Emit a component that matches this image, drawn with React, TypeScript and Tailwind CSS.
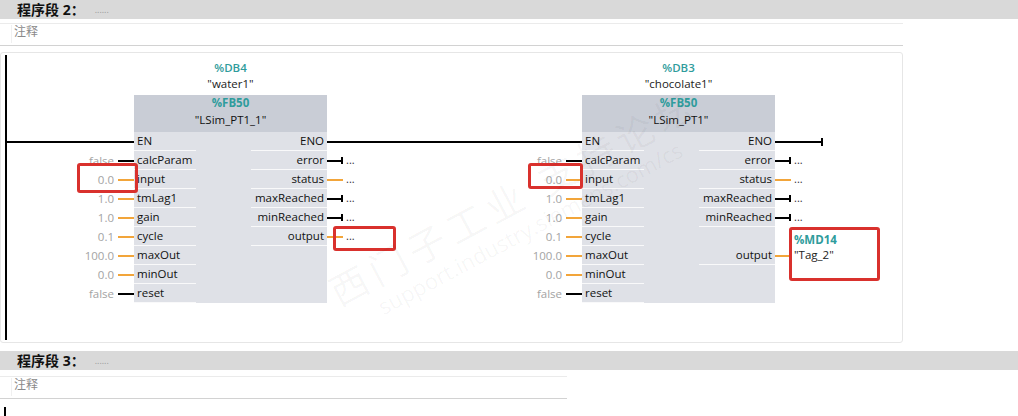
import React from 'react';

type InPin = { value?: string; label: string; kind: 'en' | 'bool' | 'real' };
type OutPin = {
  label?: string;
  kind: 'eno-full' | 'eno-tick' | 'bool' | 'real' | 'none' | 'tag-top' | 'tag';
  text?: string;
};

const ORANGE = 'bg-[#f2a53a]';

const inputs: InPin[] = [
  { label: 'EN', kind: 'en' },
  { value: 'false', label: 'calcParam', kind: 'bool' },
  { value: '0.0', label: 'input', kind: 'real' },
  { value: '1.0', label: 'tmLag1', kind: 'real' },
  { value: '1.0', label: 'gain', kind: 'real' },
  { value: '0.1', label: 'cycle', kind: 'real' },
  { value: '100.0', label: 'maxOut', kind: 'real' },
  { value: '0.0', label: 'minOut', kind: 'real' },
  { value: 'false', label: 'reset', kind: 'bool' },
];

const outputs1: OutPin[] = [
  { label: 'ENO', kind: 'eno-full' },
  { label: 'error', kind: 'bool' },
  { label: 'status', kind: 'real' },
  { label: 'maxReached', kind: 'bool' },
  { label: 'minReached', kind: 'bool' },
  { label: 'output', kind: 'real' },
  { kind: 'none' },
  { kind: 'none' },
  { kind: 'none' },
];

const outputs2: OutPin[] = [
  { label: 'ENO', kind: 'eno-tick' },
  { label: 'error', kind: 'bool' },
  { label: 'status', kind: 'real' },
  { label: 'maxReached', kind: 'bool' },
  { label: 'minReached', kind: 'bool' },
  { kind: 'tag-top', text: '%MD14' },
  { label: 'output', kind: 'tag', text: '"Tag_2"' },
  { kind: 'none' },
  { kind: 'none' },
];

const LeftPin = ({ pin }: { pin: InPin }) => {
  if (pin.kind === 'en') {
    return (
      <div className="h-[19px] flex items-center">
        <div className="flex-1 h-[2px] bg-black" />
      </div>
    );
  }
  return (
    <div className="h-[19px] flex items-center justify-end">
      <span className="text-[11.5px] text-[#a3a3a3] mr-[4px] leading-none">{pin.value}</span>
      <div className={`w-[16px] h-[2px] ${pin.kind === 'bool' ? 'bg-black' : ORANGE}`} />
    </div>
  );
};

const Dots = () => <span className="ml-[3px] text-[11px] text-[#333] leading-none -mt-[3px]">...</span>;

const RightPin = ({ pin }: { pin: OutPin }) => {
  switch (pin.kind) {
    case 'eno-full':
      return (
        <div className="h-[19px] flex items-center">
          <div className="flex-1 h-[2px] bg-black" />
        </div>
      );
    case 'eno-tick':
      return (
        <div className="h-[19px] flex items-center">
          <div className="w-[46px] h-[2px] bg-black" />
          <div className="w-[2px] h-[8px] bg-black" />
        </div>
      );
    case 'bool':
      return (
        <div className="h-[19px] flex items-center">
          <div className="w-[14px] h-[2px] bg-black" />
          <div className="w-[2px] h-[7px] bg-black" />
          <Dots />
        </div>
      );
    case 'real':
      return (
        <div className="h-[19px] flex items-center">
          <div className={`w-[16px] h-[2px] ${ORANGE}`} />
          <Dots />
        </div>
      );
    case 'tag-top':
      return (
        <div className="h-[19px] flex items-end pl-[19px]">
          <span className="text-[11.5px] font-bold text-[#2f9c9c] leading-none mb-[1px]">{pin.text}</span>
        </div>
      );
    case 'tag':
      return (
        <div className="h-[19px] flex items-center">
          <div className={`w-[17px] h-[2px] ${ORANGE}`} />
          <span className="text-[11.5px] text-[#222] leading-none ml-[2px] -mt-[2px]">{pin.text}</span>
        </div>
      );
    default:
      return <div className="h-[19px]" />;
  }
};

const FBBlock = ({
  db,
  inst,
  fb,
  name,
  leftClass,
  rightClass,
  outputs,
}: {
  db: string;
  inst: string;
  fb: string;
  name: string;
  leftClass: string;
  rightClass: string;
  outputs: OutPin[];
}) => (
  <div className="flex items-start">
    <div className={`${leftClass} pt-[72px] flex flex-col`}>
      {inputs.map((p) => (
        <LeftPin key={p.label} pin={p} />
      ))}
    </div>
    <div className="w-[193px] flex flex-col">
      <div className="h-[16px] flex items-center justify-center text-[11.5px] font-semibold text-[#2f9c9c]">{db}</div>
      <div className="h-[16px] flex items-center justify-center text-[11.5px] text-[#222]">{inst}</div>
      <div className="mt-[3px] bg-[#dfe1e7]">
        <div className="h-[37px] bg-[#c9cdd6] flex flex-col items-center pt-[-1px]">
          <div className="text-[11.5px] font-bold text-[#2f9c9c] leading-[17px] -mt-[1px]">{fb}</div>
          <div className="text-[11.5px] text-[#111] leading-[17px]">{name}</div>
        </div>
        {inputs.map((p, i) => {
          const o = outputs[i];
          const hasOut = o.label !== undefined;
          return (
            <div key={p.label} className="h-[19px] flex justify-between items-stretch">
              <div className="pl-[3px] w-[62px] flex items-center border-b border-white/80 text-[11.5px] text-[#111]">
                {p.label}
              </div>
              {hasOut ? (
                <div className="pr-[3px] w-[76px] flex items-center justify-end border-b border-white/80 text-[11.5px] text-[#111]">
                  {o.label}
                </div>
              ) : (
                <div />
              )}
            </div>
          );
        })}
      </div>
    </div>
    <div className={`${rightClass} pt-[72px] flex flex-col`}>
      {outputs.map((p, i) => (
        <RightPin key={i} pin={p} />
      ))}
    </div>
  </div>
);

const SectionHeader = ({ n }: { n: string }) => (
  <div className="h-[19px] bg-[#d9d9d9] flex items-center pl-[17px]">
    <span className="text-[14px] font-bold text-[#111] leading-none">程序段 {n}：</span>
    <span className="ml-[10px] text-[9px] text-[#999] leading-none">......</span>
  </div>
);

const Comment = ({ widthClass }: { widthClass: string }) => (
  <div className={`${widthClass} h-[23px] border-t border-b border-t-[#ebebeb] border-b-[#d2d2d2] flex items-start`}>
    <div className="w-px h-[18px] bg-[#f0f0f0] ml-[11px] mt-[1px]" />
    <span className="ml-[2px] text-[12px] leading-[16px] text-[#8a8a8a]">注释</span>
  </div>
);

const RedBox = ({ className }: { className: string }) => (
  <div className={`absolute border-[3px] border-[#d9312d] rounded-[3px] ${className}`} />
);

export default function App() {
  return (
    <div
      className="relative w-[1018px] h-[416px] overflow-hidden bg-white"
      style={{ fontFamily: '"Open Sans", "Noto Sans CJK SC", sans-serif' }}
    >
      <SectionHeader n="2" />
      <div className="mt-[4px]">
        <Comment widthClass="w-[903px]" />
      </div>

      <div className="mt-[6px] w-[903px] h-[291px] border border-[#e6e6e6] rounded-[3px] flex">
        <div className="ml-[4px] my-[2px] w-[2px] bg-black" />
        <div className="pt-[7px] flex items-start">
          <FBBlock
            db="%DB4"
            inst={'"water1"'}
            fb="%FB50"
            name={'"LSim_PT1_1"'}
            leftClass="w-[127px]"
            rightClass="w-[140px]"
            outputs={outputs1}
          />
          <FBBlock
            db="%DB3"
            inst={'"chocolate1"'}
            fb="%FB50"
            name={'"LSim_PT1"'}
            leftClass="w-[115px]"
            rightClass="w-[110px]"
            outputs={outputs2}
          />
        </div>
      </div>

      <div className="mt-[8px]">
        <SectionHeader n="3" />
      </div>
      <div className="mt-[6px]">
        <Comment widthClass="w-[567px]" />
      </div>
      <div className="mt-[8px] ml-[4px] w-[2px] h-[12px] bg-black" />

      {/* red annotation boxes */}
      <RedBox className="left-[77px] top-[163px] w-[61px] h-[30px]" />
      <RedBox className="left-[333px] top-[226px] w-[63px] h-[25px]" />
      <RedBox className="left-[528px] top-[163px] w-[55px] h-[26px]" />
      <RedBox className="left-[789px] top-[227px] w-[91px] h-[54px]" />

      {/* watermark */}
      <div className="absolute left-[300px] top-[175px] w-[440px] -rotate-[28deg] pointer-events-none select-none text-center">
        <div className="text-[38px] leading-[42px] text-black/[0.035] tracking-[6px]">西门子工业 支持论坛</div>
        <div className="text-[22px] leading-[26px] text-black/[0.045]">support.industry.siemens.com/cs</div>
      </div>
    </div>
  );
}
